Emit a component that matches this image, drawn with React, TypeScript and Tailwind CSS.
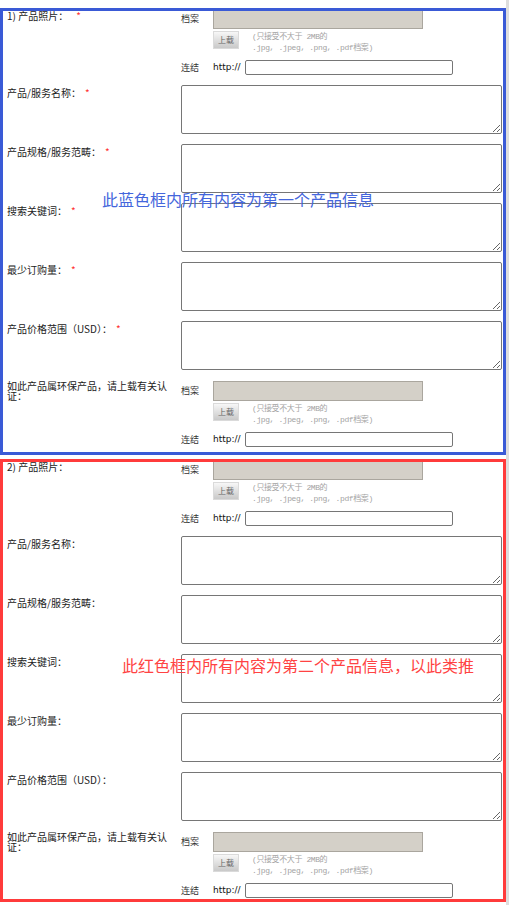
import type { ReactNode } from 'react';

const cjk = "font-['Noto_Sans_CJK_SC',sans-serif]";

const fields = [
  '产品/服务名称：',
  '产品规格/服务范畴：',
  '搜索关键词：',
  '最少订购量：',
  '产品价格范围（USD）：',
];

function Star({ show, wide }: { show: boolean; wide?: boolean }) {
  if (!show) return null;
  return <span className={wide ? 'ml-[8px] text-[#ff3030]' : 'ml-[4px] text-[#ff3030]'}>*</span>;
}

// 档案 + 上载 + 连结 block
function UploadBox() {
  return (
    <div className="flex flex-col">
      <div className="flex items-center h-[20px]">
        <span className={`w-[32px] text-[9px] text-[#333] ${cjk}`}>档案</span>
        <div className="w-[210px] h-[20px] bg-[#d4d0c8] border border-[#aaa69e]" />
      </div>
      <div className="flex items-start h-[18px] mt-[2px] pl-[32px]">
        <button
          type="button"
          className={`w-[26px] h-[18px] bg-linear-to-b from-[#f7f7f7] to-[#c9c9c9] border border-[#dadada] text-[8px] text-[#666] leading-none ${cjk}`}
        >
          上载
        </button>
        <div className="ml-[13px] text-[8px] leading-[11px] tracking-[-0.4px] text-[#a3a3a3] font-['Liberation_Mono','Noto_Sans_CJK_SC',monospace]">
          <div>(只接受不大于 2MB的</div>
          <div>.jpg, .jpeg, .png, .pdf档案)</div>
        </div>
      </div>
      <div className="flex items-center mt-[11px] h-[15px]">
        <span className={`w-[32px] text-[9px] text-[#333] ${cjk}`}>连结</span>
        <span className="text-[9px] text-[#111] font-['DejaVu_Sans',sans-serif]">http://</span>
        <input className="ml-[4px] w-[208px] h-[15px] border border-[#767676] rounded-[2px] bg-white" />
      </div>
    </div>
  );
}

function Row({ label, children, className }: { label: ReactNode; children: ReactNode; className?: string }) {
  return (
    <div className={`flex ${className ?? ''}`}>
      <div className={`w-[181px] shrink-0 pl-[7px] text-[10px] leading-[11px] text-[#222] ${cjk}`}>{label}</div>
      <div>{children}</div>
    </div>
  );
}

interface ProductProps {
  no: number;
  required: boolean;
  frame: string;
  height: string;
  note: ReactNode;
}

function Product({ no, required, frame, height, note }: ProductProps) {
  return (
    <div className={`relative w-[506px] overflow-hidden ${height}`}>
      <div className="pt-[1px]">
        <Row label={<div className="pt-[1px]">{no}) 产品照片：<Star show={required} wide /></div>}>
          <UploadBox />
        </Row>

        {fields.map((f) => (
          <Row key={f} className="mt-[10px]" label={<div className="pt-[2px]">{f}<Star show={required} /></div>}>
            <textarea className="block w-[321px] h-[49px] border border-[#767676] rounded-[2px] bg-white" />
          </Row>
        ))}

        <Row className="mt-[11px]" label={<div className="w-[165px] leading-[10px]">如此产品属环保产品，请上载有关认证：</div>}>
          <UploadBox />
        </Row>
      </div>

      {/* annotation frame */}
      <div className={`absolute inset-0 border-[3px] pointer-events-none ${frame}`} />
      {note}
    </div>
  );
}

export default function App() {
  return (
    <div className="flex w-[509px] h-[905px] bg-white">
      <div className="w-[506px] pt-[8px]">
        <Product
          no={1}
          required
          frame="border-[#3a5ad6]"
          height="h-[447px]"
          note={
            <div className={`absolute left-[102px] top-[183px] text-[16px] leading-[16px] text-[#4466dc] ${cjk}`}>
              此蓝色框内所有内容为第一个产品信息
            </div>
          }
        />
        <div className="mt-[4px]">
          <Product
            no={2}
            required={false}
            frame="border-[#ff3b3b]"
            height="h-[443px]"
            note={
              <div className={`absolute left-[122px] top-[198px] text-[16px] leading-[16px] text-[#ff4343] ${cjk}`}>
                此红色框内所有内容为第二个产品信息，以此类推
              </div>
            }
          />
        </div>
      </div>
      <div className="w-[3px] bg-[#dedede]" />
    </div>
  );
}
